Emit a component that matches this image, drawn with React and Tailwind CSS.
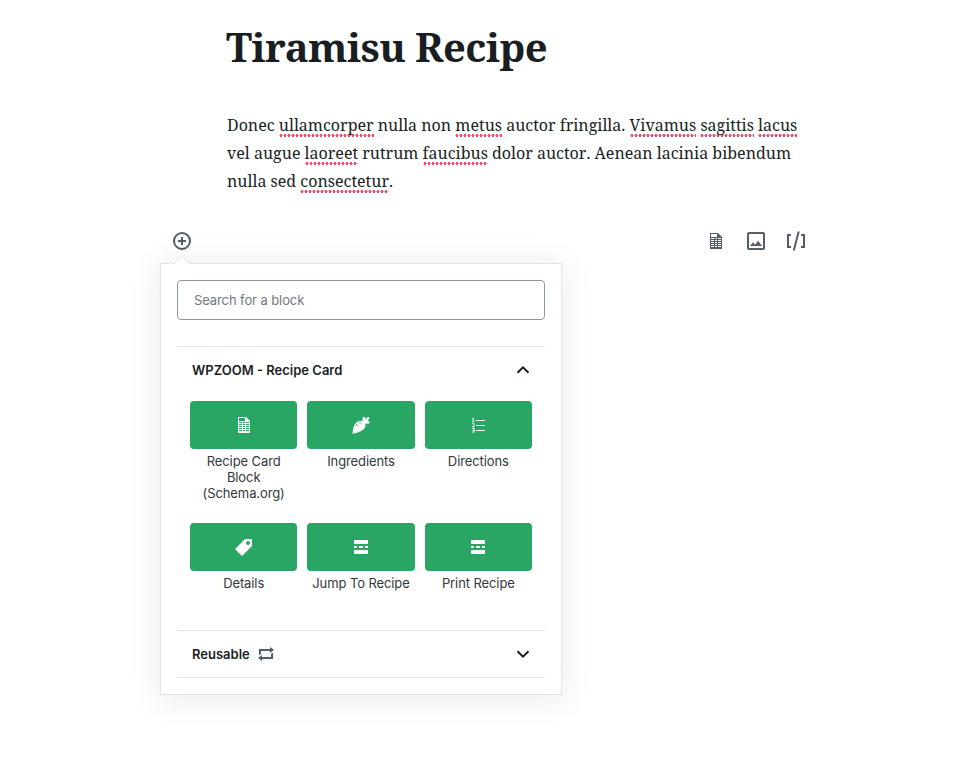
import React from 'react';

const serif = "font-['Noto_Serif','Droid_Serif','DejaVu_Serif_Condensed',serif] [font-stretch:condensed]";
const sans = "font-[Inter,'Liberation_Sans',sans-serif]";

function Flag({ children }) {
  return (
    <span className="inline-block h-7 bg-[radial-gradient(circle,#ff4a66_1.2px,transparent_1.8px)] bg-[length:4px_3px] bg-[position:0_23px] bg-repeat-x align-top">
      {children}
    </span>
  );
}

function DocIcon() {
  return (
    <svg width="20" height="20" viewBox="0 0 20 20" fill="currentColor" fillRule="evenodd">
      <path d="M12 2l4 4v12H4V2h8zm-1 4V3H5v3h6zM5 7v1h3V7H5zm4 0v1h2V7H9zm3 0v1h3V7h-3zM5 9v1h3V9H5zm4 0v1h2V9H9zm3 0v1h3V9h-3zM5 11v1h3v-1H5zm4 0v1h2v-1H9zm3 0v1h3v-1h-3zM5 13v1h3v-1H5zm4 0v1h2v-1H9zm3 0v1h3v-1h-3zM5 15v1h3v-1H5zm4 0v1h2v-1H9zm3 0v1h3v-1h-3z" />
    </svg>
  );
}

function ImageIcon() {
  return (
    <svg width="24" height="24" viewBox="0 0 24 24" fill="currentColor">
      <path fillRule="evenodd" d="M5 3h14a2 2 0 0 1 2 2v14a2 2 0 0 1-2 2H5a2 2 0 0 1-2-2V5c0-1.100.9-2 2-2zm0 2v14h14V5H5z" />
      <path d="M14.140 11.860l-3 3.870L9 13.140 6 17h12z" />
    </svg>
  );
}

function ShortcodeIcon() {
  return (
    <svg width="20" height="20" viewBox="0 0 20 20" fill="none" stroke="currentColor" strokeWidth="2">
      <path d="M5 4H2v12h3M15 4h3v12h-3" />
      <path d="M12.700 .5L7.800 19.500" />
    </svg>
  );
}

function CarrotIcon() {
  return (
    <svg width="20" height="20" viewBox="0 0 20 20" fill="currentColor">
      <path d="M1.500 18.700C1.700 14.500 2.700 9.800 5.400 7.300C7.900 5 11.700 5.300 13.600 7.700C15.400 10.200 14.400 13.300 11.700 15C8.500 17 4.800 18.500 1.500 18.700z" />
      <path d="M12.700 8L13 3M12.500 8L17 3.300M12.500 7.700L17.300 7.300" stroke="currentColor" strokeWidth="2.600" strokeLinecap="round" />
      <path d="M4.800 8.500L7.200 10.900M8.100 6.600l2 2" stroke="#29a664" strokeWidth="1" fill="none" />
    </svg>
  );
}

function DirectionsIcon() {
  return (
    <svg className="ml-px" width="20" height="20" viewBox="0 0 20 20" fill="none" stroke="currentColor">
      <path d="M7 5.500h9M7 10.500h9M7 15.500h9" />
      <path strokeWidth=".9" d="M3.200 3.800l1-.6v3.600M3 6.600h2.500M3.100 8.600h2v1.700l-1.800 1.500h2.400M3 13.500h2.300v3.600H3M3.500 15.300h1.800" />
    </svg>
  );
}

function TagIcon() {
  return (
    <svg width="20" height="20" viewBox="0 0 20 20" fill="currentColor">
      <path fillRule="evenodd" d="M11 2h7v7L8 19l-7-7L11 2zm3 6a2 2 0 1 0 0-4 2 2 0 0 0 0 4z" />
    </svg>
  );
}

function MoreIcon() {
  return (
    <svg width="20" height="20" viewBox="0 0 20 20" fill="currentColor">
      <path d="M3 3h14v4H3zM3 9h3v2H3zM8 9h4v2H8zM14 9h3v2h-3zM3 13h14v4H3z" />
    </svg>
  );
}

function Chevron({ up }) {
  return (
    <svg
      className={up ? '-mt-[2px]' : ''}
      width="14"
      height="10"
      viewBox="0 0 14 10"
      fill="none"
      stroke="#191e23"
      strokeWidth="2"
    >
      <path d={up ? 'M1.500 7.700L7 2.400l5.500 5.300' : 'M1.500 2.300L7 7.600l5.500-5.300'} />
    </svg>
  );
}

function RepeatIcon() {
  return (
    <svg width="20" height="20" viewBox="0 0 20 20" fill="currentColor">
      <path d="M5 7v3l-2 1.500V5h11V3l4 3.010L14 9V7H5zm10 6v-3l2-1.500V15H6v2l-4-3.010L6 11v2h9z" />
    </svg>
  );
}

const blocks = [
  { label: 'Recipe Card Block (Schema.org)', icon: <DocIcon /> },
  { label: 'Ingredients', icon: <CarrotIcon /> },
  { label: 'Directions', icon: <DirectionsIcon /> },
  { label: 'Details', icon: <TagIcon /> },
  { label: 'Jump To Recipe', icon: <MoreIcon /> },
  { label: 'Print Recipe', icon: <MoreIcon /> },
];

export default function App() {
  return (
    <main className="h-[770px] w-[955px] overflow-hidden bg-white text-[#191e23]">
      <div className={`pl-[227px] ${serif}`}>
        <h1 className="-ml-px h-[111px] pt-[19px] text-[40px] leading-[56px] font-bold tracking-[-0.56px] whitespace-nowrap">
          Tiramisu Recipe
        </h1>
        <div className="text-[16px] leading-7 whitespace-nowrap [font-kerning:none]">
          <p className="h-7">
            Donec <Flag>ullamcorper</Flag> nulla non <Flag>metus</Flag> auctor fringilla. <Flag>Vivamus</Flag>{' '}
            <Flag>sagittis</Flag> <Flag>lacus</Flag>
          </p>
          <p className="h-7">
            vel augue <Flag>laoreet</Flag> rutrum <Flag>faucibus</Flag> dolor auctor. Aenean lacinia bibendum
          </p>
          <p className="h-7">
            nulla sed <Flag>consectetur</Flag>.
          </p>
        </div>
      </div>

      <div className="mt-[34px] flex h-6 items-center pr-[149px] pl-[172px] text-[#555d66]">
        <svg width="20" height="20" viewBox="0 0 20 20" fill="none" stroke="currentColor" strokeWidth="2">
          <circle cx="10" cy="10" r="8" />
          <path d="M10 6v8M6 10h8" />
        </svg>
        <div className="ml-auto flex items-center gap-[18px]">
          <DocIcon />
          <ImageIcon />
          <ShortcodeIcon />
        </div>
      </div>

      <section
        className={`relative mt-[10px] ml-[160px] h-[432px] w-[402px] border border-[#e2e4e7] bg-white px-4 pt-4 text-[13px] shadow-[0_3px_30px_rgba(25,30,35,0.1)] ${sans}`}
      >
        <svg className="absolute -top-[9px] left-[13px]" width="16" height="10" viewBox="0 0 16 10">
          <path d="M0 9.500L8 1l8 8.500V10H0z" fill="#fff" />
          <path d="M0 8.500L8 .8l8 7.700" fill="none" stroke="#e2e4e7" />
        </svg>
        <input
          placeholder="Search for a block"
          className="block h-10 w-full rounded-[4px] border border-[#8d96a0] px-4 text-[13px] tracking-[-0.1px] text-[#191e23] outline-none placeholder:text-[#72777c]"
        />
        <div className="mt-[26px] border-t border-[#e2e4e7]">
          <div className="flex h-[47px] items-center justify-between px-[15px] font-semibold">
            <span>WPZOOM - Recipe Card</span>
            <Chevron up />
          </div>
          <div className="grid h-[236px] grid-cols-3 content-start gap-x-[10px] px-[13px] pt-[7px]">
            {blocks.map((b) => (
              <div key={b.label} className="h-[122px] text-center leading-4 tracking-[-0.1px] text-[#32373c]">
                <div className="mb-1 flex h-12 items-center justify-center rounded-[4px] bg-[#29a664] text-white">
                  {b.icon}
                </div>
                <div className="px-1">
                  {b.label.startsWith('Recipe') ? <div className="px-2">{b.label}</div> : b.label}
                </div>
              </div>
            ))}
          </div>
        </div>
        <div className="flex h-12 items-center border-y border-[#e2e4e7] px-[15px] font-semibold">
          <span className="pt-[2px]">Reusable</span>
          <span className="ml-[6px] text-[#555d66]">
            <RepeatIcon />
          </span>
          <span className="ml-auto">
            <Chevron />
          </span>
        </div>
      </section>
    </main>
  );
}
